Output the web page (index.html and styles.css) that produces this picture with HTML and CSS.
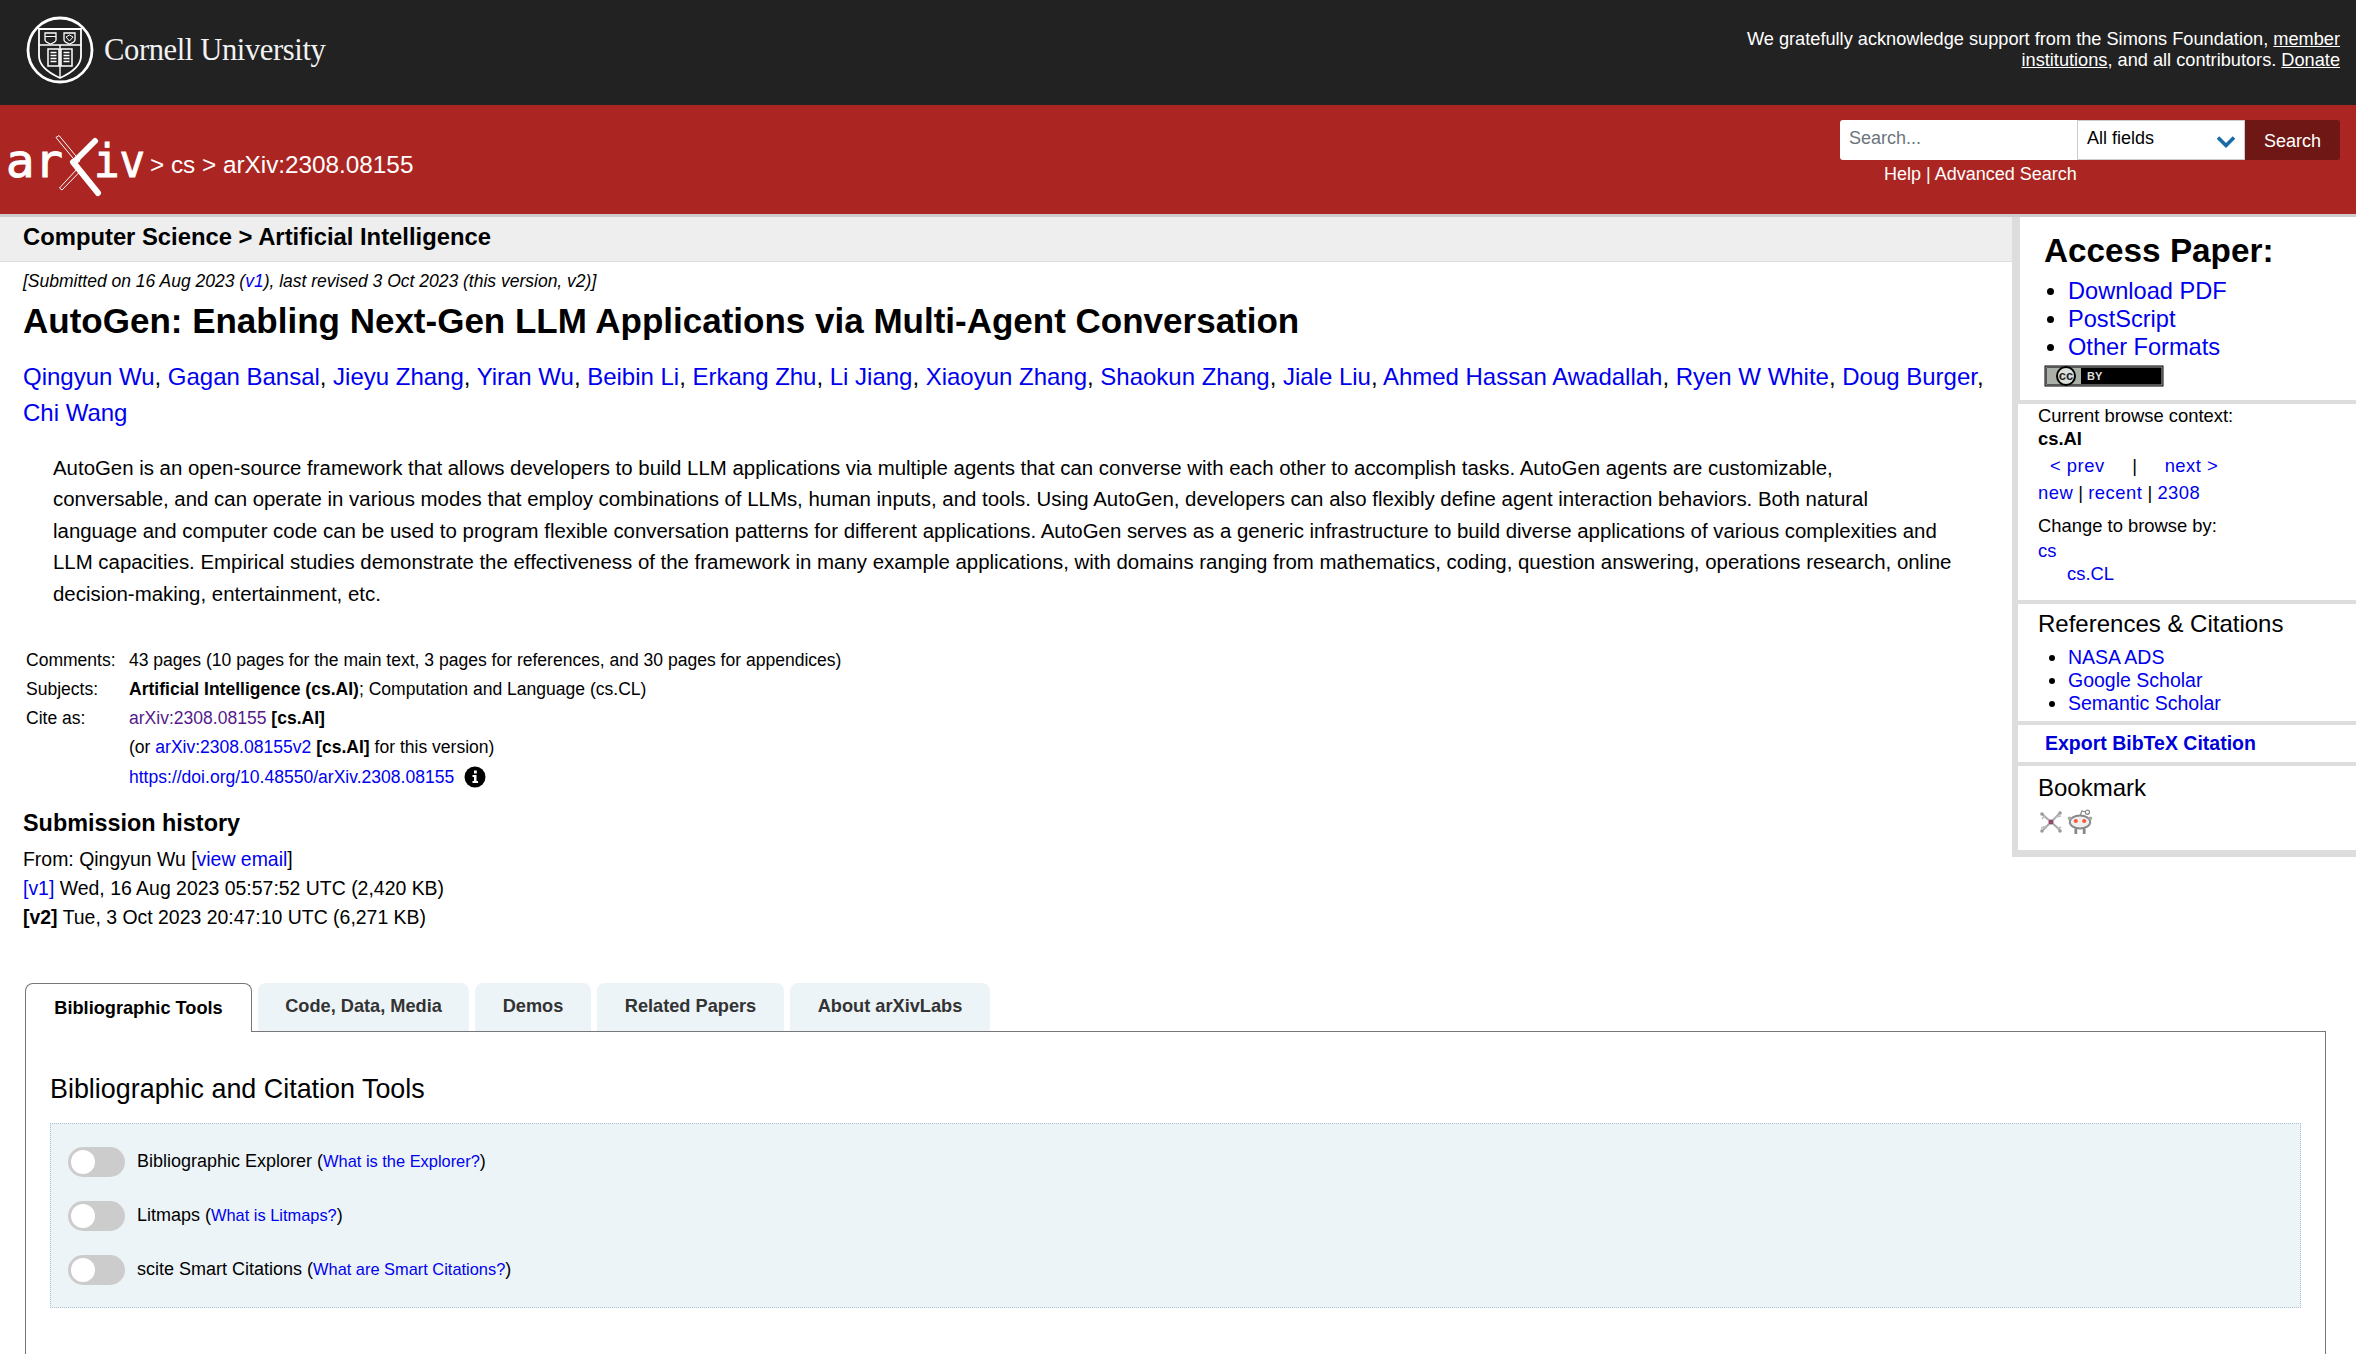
FILE: index.html
```html
<!DOCTYPE html>
<html lang="en">
<head>
<meta charset="utf-8">
<title>AutoGen: Enabling Next-Gen LLM Applications via Multi-Agent Conversation</title>
<link rel="stylesheet" href="styles.css">
</head>
<body>
<header class="cu-bar">
  <a class="cu-logo" href="#">
    <svg class="seal" viewBox="0 0 68 68" aria-hidden="true">
      <circle cx="34" cy="34" r="32" fill="none" stroke="#fff" stroke-width="2.8"/>
      <path d="M13 13H55V40C55 50 45 57 34 62C23 57 13 50 13 40Z" fill="none" stroke="#fff" stroke-width="1.8"/>
      <path d="M13 29H55M34 29V62" stroke="#fff" stroke-width="1.4" fill="none"/>
      <path d="M19 17H30V24C30 26 27 27 24.500 28C22 27 19 26 19 24Z" fill="none" stroke="#fff" stroke-width="1.3"/>
      <path d="M38 17H49V24C49 26 46 27 43.500 28C41 27 38 26 38 24Z" fill="none" stroke="#fff" stroke-width="1.3"/>
      <path d="M19 20.500H30M40 21L43.500 19L47 21L43.500 25Z" stroke="#fff" stroke-width="1" fill="none"/>
      <path d="M22 33H33V50H22ZM35 33H46V50H35Z" fill="none" stroke="#fff" stroke-width="1.500"/>
      <path d="M24.500 36.500H30.500M24.500 39.500H30.500M24.500 42.500H30.500M24.500 45.500H30.500M37.500 36.500H43.500M37.500 39.500H43.500M37.500 42.500H43.500M37.500 45.500H43.500" stroke="#fff" stroke-width="1.500"/>
    </svg>
    <span class="cu-name">Cornell University</span>
  </a>
  <p class="ack">We gratefully acknowledge support from the Simons Foundation, <a href="#">member institutions</a>, and all contributors. <a href="#">Donate</a></p>
</header>

<div class="ax-bar">
  <div class="crumbs">
    <svg class="ax-logo" viewBox="0 0 148 64" aria-hidden="true">
      <text class="ax-mark" x="6" y="45" textLength="57" lengthAdjust="spacingAndGlyphs">ar</text>
      <text class="ax-mark" x="94" y="45" textLength="51" lengthAdjust="spacingAndGlyphs">iv</text>
      <path d="M73 30L98 61" stroke="#fff" stroke-width="6" stroke-linecap="round"/>
      <path d="M95 9L76 28" stroke="#fff" stroke-width="6" stroke-linecap="round"/>
      <path d="M56 5.500L59 3.500L80 29L77 31ZM78 36L81 38.500L62 58L59.500 56Z" fill="none" stroke="#fff" stroke-width="1"/>
    </svg>
    <span class="trail">&gt; cs &gt; arXiv:2308.08155</span>
  </div>
  <div class="search">
    <div class="search-row">
      <span class="s-input">Search...</span>
      <span class="s-select">All fields
        <svg class="chev" viewBox="0 0 20 13" aria-hidden="true"><path d="M2 2.500L10 10.500L18 2.500" fill="none" stroke="#1a6aa8" stroke-width="3.600"/></svg>
      </span>
      <span class="s-button">Search</span>
    </div>
    <p class="s-links"><a href="#">Help</a> | <a href="#">Advanced Search</a></p>
  </div>
</div>

<div class="layout">
  <main class="main">
    <div class="subheader">Computer Science &gt; Artificial Intelligence</div>
    <div class="paper">
      <p class="dateline">[Submitted on 16 Aug 2023 (<a href="#">v1</a>), last revised 3 Oct 2023 (this version, v2)]</p>
      <h1 class="title">AutoGen: Enabling Next-Gen LLM Applications via Multi-Agent Conversation</h1>
      <p class="authors"><a href="#">Qingyun Wu</a>, <a href="#">Gagan Bansal</a>, <a href="#">Jieyu Zhang</a>, <a href="#">Yiran Wu</a>, <a href="#">Beibin Li</a>, <a href="#">Erkang Zhu</a>, <a href="#">Li Jiang</a>, <a href="#">Xiaoyun Zhang</a>, <a href="#">Shaokun Zhang</a>, <a href="#">Jiale Liu</a>, <a href="#">Ahmed Hassan Awadallah</a>, <a href="#">Ryen W White</a>, <a href="#">Doug Burger</a>, <a href="#">Chi Wang</a></p>
      <blockquote class="abstract">AutoGen is an open-source framework that allows developers to build LLM applications via multiple agents that can converse with each other to accomplish tasks. AutoGen agents are customizable,<br>conversable, and can operate in various modes that employ combinations of LLMs, human inputs, and tools. Using AutoGen, developers can also flexibly define agent interaction behaviors. Both natural<br>language and computer code can be used to program flexible conversation patterns for different applications. AutoGen serves as a generic infrastructure to build diverse applications of various complexities and<br>LLM capacities. Empirical studies demonstrate the effectiveness of the framework in many example applications, with domains ranging from mathematics, coding, question answering, operations research, online<br>decision-making, entertainment, etc.</blockquote>
      <div class="meta">
        <div class="m-label">Comments:</div><div>43 pages (10 pages for the main text, 3 pages for references, and 30 pages for appendices)</div>
        <div class="m-label">Subjects:</div><div><b>Artificial Intelligence (cs.AI)</b>; Computation and Language (cs.CL)</div>
        <div class="m-label">Cite as:</div><div><a class="visited" href="#">arXiv:2308.08155</a> <b>[cs.AI]</b></div>
        <div></div><div>(or <a href="#">arXiv:2308.08155v2</a> <b>[cs.AI]</b> for this version)</div>
        <div></div><div class="doi"><a href="#">https://doi.org/10.48550/arXiv.2308.08155</a>
          <svg class="info" viewBox="0 0 22 22" aria-hidden="true"><circle cx="11" cy="11" r="10.500"/><path d="M8.500 9H12.500V15H14V17H8.500V15H10V11H8.500ZM10 4.500H12.800V7.500H10Z" fill="#fff"/></svg>
        </div>
      </div>
      <h2 class="history-h">Submission history</h2>
      <div class="history">
        <div>From: Qingyun Wu [<a href="#">view email</a>]</div>
        <div><a href="#">[v1]</a> Wed, 16 Aug 2023 05:57:52 UTC (2,420 KB)</div>
        <div><b>[v2]</b> Tue, 3 Oct 2023 20:47:10 UTC (6,271 KB)</div>
      </div>
    </div>
  </main>
  <aside class="side">
    <section class="box access">
      <h2 class="access-h">Access Paper:</h2>
      <ul class="access-list">
        <li><a href="#">Download PDF</a></li>
        <li><a href="#">PostScript</a></li>
        <li><a href="#">Other Formats</a></li>
      </ul>
      <svg class="cc" viewBox="0 0 120 22" aria-hidden="true">
        <rect x="0.500" y="0.500" width="119" height="21" fill="#000"/>
        <rect x="2" y="2" width="116" height="18" fill="none" stroke="#aaa" stroke-width="1"/>
        <rect x="3" y="3" width="34" height="16" fill="#aab0a8"/>
        <circle cx="22" cy="11" r="9" fill="#dcdedb" stroke="#000" stroke-width="2"/>
        <text x="22" y="15" class="cc-c">cc</text>
        <text x="43" y="15" class="cc-by">BY</text>
      </svg>
    </section>
    <section class="box browse">
      <div>Current browse context:</div>
      <div class="bold">cs.AI</div>
      <div class="pn"><a href="#">&lt; prev</a><span class="pipe">|</span><a href="#">next &gt;</a></div>
      <div class="nrl"><a href="#">new</a> | <a href="#">recent</a> | <a href="#">2308</a></div>
      <div class="change">Change to browse by:</div>
      <div class="small"><a href="#">cs</a></div>
      <div class="indent"><a href="#">cs.CL</a></div>
    </section>
    <section class="box refs">
      <h3 class="side-h">References &amp; Citations</h3>
      <ul class="ref-list">
        <li><a href="#">NASA ADS</a></li>
        <li><a href="#">Google Scholar</a></li>
        <li><a href="#">Semantic Scholar</a></li>
      </ul>
    </section>
    <section class="box export"><a href="#">Export BibTeX Citation</a></section>
    <section class="box bookmark">
      <h3 class="side-h">Bookmark</h3>
      <div class="marks">
        <svg viewBox="0 0 26 26" aria-hidden="true"><path d="M4 5L22 21M21 5L5 21" stroke="#aaa" stroke-width="2"/><path d="M3 19L9 17M17 8L23 7M7 6L4 10M19 20L23 18" stroke="#bbb" stroke-width="1.500"/><circle cx="13" cy="13" r="2.500" fill="#934a6a"/><circle cx="4" cy="5" r="1.800" fill="#999"/><circle cx="22" cy="4" r="1.800" fill="#999"/><circle cx="4" cy="22" r="1.800" fill="#999"/><circle cx="22" cy="22" r="1.800" fill="#999"/></svg>
        <svg viewBox="0 0 28 28" aria-hidden="true"><circle cx="22" cy="3.500" r="2.200" fill="none" stroke="#888" stroke-width="1.300"/><path d="M14 8L16 2L20 3" fill="none" stroke="#888" stroke-width="1.300"/><ellipse cx="14" cy="14" rx="11" ry="7" fill="#eee" stroke="#888" stroke-width="2"/><circle cx="9.500" cy="13" r="2.200" fill="#f53"/><circle cx="18.500" cy="13" r="2.200" fill="#f53"/><circle cx="2.800" cy="10" r="2" fill="#aaa"/><circle cx="25.200" cy="10" r="2" fill="#aaa"/><path d="M8 21V27H11V21M17 21V27H20V21" fill="#888"/></svg>
      </div>
    </section>
  </aside>
</div>

<section class="labs">
  <nav class="tabs">
    <a class="tab active" href="#">Bibliographic Tools</a>
    <a class="tab t2" href="#">Code, Data, Media</a>
    <a class="tab t3" href="#">Demos</a>
    <a class="tab t4" href="#">Related Papers</a>
    <a class="tab t5" href="#">About arXivLabs</a>
  </nav>
  <div class="panel">
    <h2 class="panel-h">Bibliographic and Citation Tools</h2>
    <div class="tools">
      <div class="tool"><span class="toggle"></span><span>Bibliographic Explorer (<a class="tiny" href="#">What is the Explorer?</a>)</span></div>
      <div class="tool"><span class="toggle"></span><span>Litmaps (<a class="tiny" href="#">What is Litmaps?</a>)</span></div>
      <div class="tool"><span class="toggle"></span><span>scite Smart Citations (<a class="tiny" href="#">What are Smart Citations?</a>)</span></div>
    </div>
  </div>
</section>
</body>
</html>
```

FILE: styles.css
```css
* { box-sizing: border-box; }
html, body { margin: 0; padding: 0; }
body {
  height: 1354px;
  overflow: hidden;
  background: #fff;
  color: #000;
  font-family: "Liberation Sans", Arial, sans-serif;
}
a { color: #00e; text-decoration: none; }
p, h1, h2, h3, ul, blockquote { margin: 0; padding: 0; }

.cu-bar {
  height: 105px;
  background: #222;
  display: flex;
  justify-content: space-between;
  padding: 0 16px 0 26px;
}
.cu-logo { display: flex; align-items: center; gap: 10px; height: 99px; color: #fff; }
.seal { width: 68px; height: 68px; }
.cu-name {
  font-family: "Liberation Serif", serif;
  font-size: 30.600px;
  letter-spacing: -0.4px;
  color: #f2f2f2;
  padding-top: 2px;
}
.ack {
  width: 640px;
  padding-top: 29px;
  text-align: right;
  color: #fff;
  font-size: 18.200px;
  line-height: 21px;
}
.ack a { color: #fff; text-decoration: underline; }

.ax-bar {
  height: 112px;
  background: #ab2622;
  border-bottom: 3px solid #ccc;
  display: flex;
  justify-content: space-between;
  padding-right: 16px;
  color: #fff;
}
.crumbs { display: flex; align-items: center; height: 118px; }
.ax-logo { width: 148px; height: 64px; overflow: visible; }
.ax-mark {
  font-family: "DejaVu Sans Mono", monospace;
  font-size: 47px;
  fill: #fff;
  stroke: #fff;
  stroke-width: 1px;
}
.trail { font-size: 24.300px; margin-left: 2px; padding-top: 2px; }
.search { padding-top: 15px; width: 500px; }
.search-row { display: flex; height: 40px; }
.s-input {
  width: 237px;
  background: #fff;
  border-radius: 3px 0 0 3px;
  color: #6c757d;
  font-size: 18px;
  line-height: 37px;
  padding-left: 9px;
}
.s-select {
  width: 168px;
  background: #fff;
  border: 1px solid #ccc;
  color: #000;
  font-size: 18px;
  line-height: 35px;
  padding-left: 9px;
  position: relative;
}
.chev { position: absolute; right: 8px; top: 14px; width: 20px; height: 13px; }
.s-button {
  width: 95px;
  background: #6f1714;
  border-radius: 0 3px 3px 0;
  color: #fff;
  font-size: 18px;
  line-height: 42px;
  text-align: center;
}
.s-links { padding-left: 44px; font-size: 18px; line-height: 29px; color: #fff; }
.s-links a { color: #fff; }

.layout { display: flex; align-items: flex-start; }
.main { width: 2012px; flex: none; }
.subheader {
  height: 45px;
  background: #eee;
  border-bottom: 1px solid #ddd;
  padding-left: 23px;
  font-size: 23.800px;
  font-weight: 700;
  line-height: 40px;
}
.paper { padding: 0 23px; }
.dateline { font-size: 17.500px; font-style: italic; line-height: 24px; padding-top: 7px; }
.title { font-size: 35px; line-height: 44px; font-weight: 700; padding-top: 5.500px; }
.authors { font-size: 24px; letter-spacing: -0.012px; line-height: 36px; padding-top: 16px; }
.abstract { font-size: 20.420px; line-height: 31.500px; padding: 22px 0 0 30px; white-space: nowrap; }
.meta {
  display: grid;
  grid-template-columns: 103px 1fr;
  padding: 35.500px 0 0 3px;
  font-size: 17.550px;
  line-height: 29.300px;
}
.visited { color: #551a8b; }
.doi { display: flex; align-items: center; gap: 10px; }
.info { width: 22px; height: 22px; }
.history-h { font-size: 23.400px; line-height: 36px; font-weight: 700; padding-top: 13px; height: 49px; }
.history { font-size: 19.450px; line-height: 29px; padding-top: 4.500px; }

.side { flex: 1; background: #ddd; padding-bottom: 7px; }
.box { background: #fff; margin-left: 6px; padding-left: 20px; }
.access { margin-left: 8px; height: 183px; margin-bottom: 4px; padding-left: 24px; padding-top: 15px; }
.access-h { font-size: 33.300px; line-height: 37px; font-weight: 700; }
.access-list { list-style: disc; padding-left: 24px; margin-top: 7.500px; font-size: 23.600px; line-height: 28px; }
.cc { display: block; width: 120px; height: 22px; margin-top: 4px; }
.cc-c { font-size: 13px; font-weight: 700; text-anchor: middle; fill: #222; font-family: "Liberation Sans", sans-serif; }
.cc-by { font-size: 11px; font-weight: 700; fill: #ddd; font-family: "Liberation Sans", sans-serif; }
.browse { height: 196px; margin-bottom: 4px; padding-left: 20px; font-size: 18.400px; line-height: 23px; }
.bold { font-weight: 700; }
.pn { padding: 4px 0 0 12px; }
.pn a, .nrl a { letter-spacing: 0.5px; }
.pipe { display: inline-block; width: 60px; text-align: center; color: #000; }
.nrl { padding-top: 4px; }
.change { padding-top: 10px; }
.small { padding-top: 2px; line-height: 23px; }
.indent { padding-left: 29px; line-height: 24px; }
.refs { height: 117px; margin-bottom: 4px; }
.side-h { font-size: 24px; font-weight: 400; line-height: 36px; padding-top: 2px; height: 42.500px; }
.ref-list { list-style: disc; padding-left: 30px; font-size: 19.500px; line-height: 23px; margin-top: -1px; }
.export { height: 37px; margin-bottom: 4px; padding-left: 27px; font-size: 19.500px; font-weight: 700; line-height: 36px; }
.export a { color: #0000d8; }
.bookmark { height: 84px; }
.bookmark .side-h { height: 41px; padding-top: 3.500px; }
.marks { display: flex; gap: 3px; height: 28px; padding-top: 1.500px; }
.marks svg { width: 26px; height: 26px; }

.labs { margin: 0; position: absolute; top: 983px; left: 25px; width: 2301px; }
.tabs { display: flex; gap: 6px; height: 49px; position: relative; z-index: 1; }
.tab {
  background: #edf4f8;
  border-radius: 8px 8px 0 0;
  color: #333;
  font-size: 18.200px;
  font-weight: 700;
  line-height: 47px;
  text-align: center;
  height: 48px;
}
.tab.active {
  width: 227px;
  height: 49px;
  background: #fff;
  color: #000;
  border: 1px solid #777;
  border-bottom: 0;
  line-height: 48px;
}
.t2 { width: 211px; }
.t3 { width: 116px; }
.t4 { width: 187px; }
.t5 { width: 200px; }
.panel {
  margin-top: -1px;
  border: 1px solid #777;
  height: 600px;
  padding: 36px 24px 0;
}
.panel-h { font-size: 26.900px; font-weight: 400; line-height: 42px; }
.tools {
  margin-top: 13px;
  height: 185px;
  background: #edf4f8;
  border: 1px dotted #a8c0cf;
  padding: 23px 17px 0;
}
.tool { display: flex; align-items: center; gap: 12px; height: 30px; margin-bottom: 24px; font-size: 18px; }
.tool span:last-child { padding-bottom: 2px; }
.tiny { font-size: 16.400px; }
.toggle {
  width: 57px;
  height: 30px;
  background: #ccc;
  border-radius: 15px;
  position: relative;
}
.toggle::after {
  content: "";
  position: absolute;
  left: 3px;
  top: 3px;
  width: 24px;
  height: 24px;
  border-radius: 50%;
  background: #fff;
}
```
